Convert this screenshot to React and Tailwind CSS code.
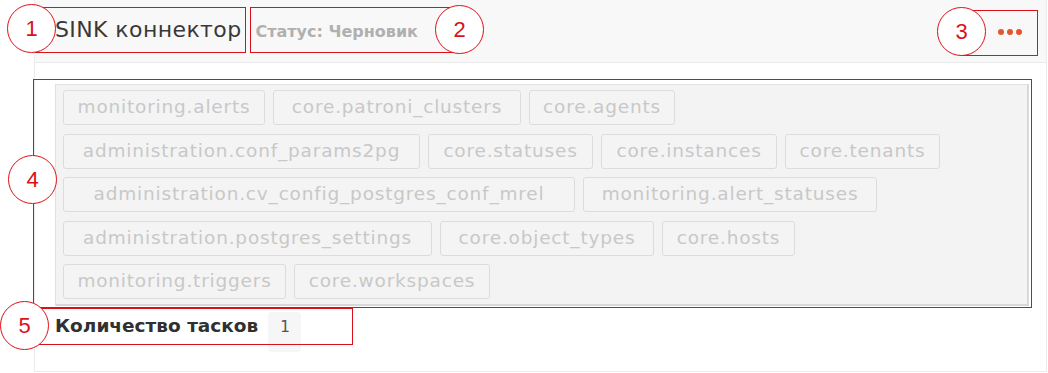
import React from "react";

const tags = [
  ["monitoring.alerts", "w-[202px]"],
  ["core.patroni_clusters", "w-[248px]"],
  ["core.agents", "w-[146px]"],
  ["administration.conf_params2pg", "w-[357px]"],
  ["core.statuses", "w-[165px]"],
  ["core.instances", "w-[176px]"],
  ["core.tenants", "w-[155px]"],
  ["administration.cv_config_postgres_conf_mrel", "w-[512px]"],
  ["monitoring.alert_statuses", "w-[294px]"],
  ["administration.postgres_settings", "w-[369px]"],
  ["core.object_types", "w-[214px]"],
  ["core.hosts", "w-[133px]"],
  ["monitoring.triggers", "w-[223px]"],
  ["core.workspaces", "w-[196px]"],
];

function Circle({ className, n }) {
  return (
    <div
      className={
        "absolute w-[49px] h-[49px] rounded-full border border-[#dc1018] bg-white flex items-center justify-center text-[22px] leading-none text-[#dc1018] " +
        className
      }
      style={{ fontFamily: '"Liberation Sans", Arial, sans-serif' }}
    >
      {n}
    </div>
  );
}

export default function App() {
  return (
    <div
      className="relative w-[1048px] h-[373px] bg-white overflow-hidden"
      style={{ fontFamily: '"DejaVu Sans", sans-serif' }}
    >
      <div className="ml-[34px] w-[1013px] h-[372px] border-x border-b border-[#ececec] flex flex-col">
        <div className="h-[63px] shrink-0 bg-[#f8f8f8] border-b border-[#ebebeb] flex items-center pl-5 pr-[24px]">
          <div className="flex items-baseline gap-[14px] pb-[3px]">
            <span className="text-[22px] tracking-[0.4px] text-[#383838]">SINK коннектор</span>
            <span className="text-[16px] font-bold text-[#b0b0b0]">Статус: Черновик</span>
          </div>
          <div className="ml-auto flex items-center gap-[3px] pt-[1px]">
            <span className="w-[6px] h-[6px] rounded-full bg-[#e4552f]" />
            <span className="w-[6px] h-[6px] rounded-full bg-[#e4552f]" />
            <span className="w-[6px] h-[6px] rounded-full bg-[#e4552f]" />
          </div>
        </div>
        <div className="pt-[21px] pl-5 pr-[17px]">
          <div className="h-[222px] bg-[#f3f3f3] border border-[#e0e0e0] border-r-2 border-b-2 border-r-[#d8d8d8] border-b-[#d8d8d8] pt-[5px] px-[7px] flex flex-wrap content-start gap-x-2 gap-y-[8.5px]">
            {tags.map(([t, w]) => (
              <div
                key={t}
                className={
                  "h-[35px] border border-[#dcdcdc] rounded-[3px] bg-[#f4f4f4] text-[18.5px] tracking-[0.8px] leading-none text-[#c8c8c8] flex items-center justify-center whitespace-nowrap " +
                  w
                }
              >
                {t}
              </div>
            ))}
          </div>
          <div className="mt-[6px] flex items-start gap-[10px]">
            <span className="text-[18.5px] leading-[28px] font-bold text-[#303030]">Количество тасков</span>
            <div
              className="w-[33px] h-[40px] rounded-[4px] bg-[#f6f6f6] pt-[7px] text-center text-[16px] leading-[16px] text-[#555]"
              style={{ fontFamily: '"DejaVu Sans Mono", monospace' }}
            >
              1
            </div>
          </div>
        </div>
      </div>

      {/* annotation overlays */}
      <div className="absolute left-[35px] top-[7px] w-[211px] h-[46px] border border-[#dc1018]" />
      <div className="absolute left-[250px] top-[7px] w-[210px] h-[46px] border border-[#dc1018]" />
      <div className="absolute left-[961px] top-[10px] w-[77px] h-[46px] border border-[#dc1018]" />
      <div className="absolute left-[33px] top-[79px] w-[999px] h-[229px] border border-[#dc1018]" />
      <div className="absolute left-[24px] top-[308px] w-[329px] h-[37px] border border-[#dc1018]" />
      <Circle className="left-[7px] top-[4px]" n="1" />
      <Circle className="left-[435px] top-[5px]" n="2" />
      <Circle className="left-[937px] top-[7px]" n="3" />
      <Circle className="left-[8px] top-[155px]" n="4" />
      <Circle className="left-[0px] top-[301px]" n="5" />
    </div>
  );
}
